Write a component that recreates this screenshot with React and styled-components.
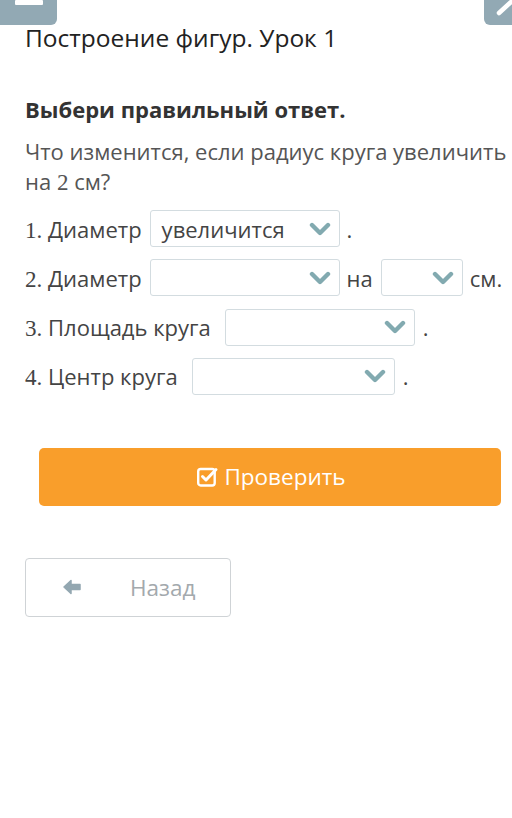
import React from "react";
import styled, { createGlobalStyle } from "styled-components";

const Global = createGlobalStyle`
  html, body { margin: 0; padding: 0; background: #fff; }
  body { font-family: "Open Sans", "Noto Sans", sans-serif; color: #333; }
`;

const Page = styled.div`
  width: 512px;
  height: 818px;
  overflow: hidden;
`;

const TopBar = styled.div`
  display: flex;
  justify-content: space-between;
  height: 25px;
`;

const Tab = styled.div`
  box-sizing: border-box;
  width: ${(p) => p.$w}px;
  height: 25px;
  background: #92a9b4;
  border-radius: ${(p) => (p.$left ? "0 0 6px 0" : "0 0 0 6px")};
  display: flex;
  align-items: flex-start;
  justify-content: ${(p) => (p.$left ? "center" : "flex-end")};
`;

const Bar = styled.div`
  width: 28px;
  height: 5px;
  background: #fff;
  border-radius: 1px;
`;

const Content = styled.div`
  padding: 0 0 0 25px;
`;

const Title = styled.h1`
  margin: 0;
  font-weight: 400;
  font-size: 24.5px;
  line-height: 26px;
  color: #222;
`;

const Instruction = styled.h2`
  margin: 43px 0 0;
  font-weight: 700;
  font-size: 22px;
  line-height: 30px;
  color: #333;
`;

const Question = styled.p`
  margin: 12px 0 0;
  font-size: 22px;
  line-height: 30px;
  color: #555;
  white-space: nowrap;
`;

const Num = styled.span`
  font-family: "Liberation Serif", "DejaVu Serif", serif;
  font-size: 1.05em;
`;

const Rows = styled.div`
  margin-top: 13px;
  display: flex;
  flex-direction: column;
  gap: 12.3px;
`;

const Row = styled.div`
  display: flex;
  align-items: center;
  height: 37px;
  font-size: 22px;
  color: #444;
  white-space: nowrap;
`;

const Label = styled.span`
  margin-right: ${(p) => p.$gap}px;
`;

const Select = styled.div`
  box-sizing: border-box;
  width: ${(p) => p.$w}px;
  height: 37px;
  border: 1px solid #d3dce0;
  border-radius: 3px;
  display: flex;
  align-items: center;
  justify-content: space-between;
  padding: 0 8px 0 11px;
  font-size: 22px;
  color: #444;
  background: #fff;
`;

const After = styled.span`
  margin: 0 ${(p) => p.$r || 0}px 0 ${(p) => p.$l}px;
`;

const Check = styled.button`
  margin: 53px 0 0 14px;
  width: 462px;
  height: 58px;
  border: none;
  border-radius: 5px;
  background: #f99e2b;
  color: #fff;
  font-family: inherit;
  font-size: 22.5px;
  display: flex;
  align-items: center;
  justify-content: center;
  gap: 5px;
  padding: 0 0 0 2px;
`;

const Back = styled.button`
  margin-top: 52px;
  width: 206px;
  height: 59px;
  border: 1px solid #cfd3d6;
  border-radius: 4px;
  background: #fff;
  color: #a3a9ad;
  font-family: inherit;
  font-size: 22.5px;
  display: flex;
  align-items: center;
  padding: 0 0 0 36px;
  box-sizing: border-box;
  gap: 48px;
`;

const Chevron = () => (
  <svg width="22" height="16" viewBox="0 0 22 16">
    <path d="M3 4 L11 12 L19 4" fill="none" stroke="#82aab0" strokeWidth="4.4" strokeLinecap="round" strokeLinejoin="round" />
  </svg>
);

const CheckIcon = () => (
  <svg width="23" height="23" viewBox="0 0 23 23">
    <rect x="2.2" y="4" width="16.5" height="16.5" rx="2.5" fill="none" stroke="#fff" strokeWidth="2.4" />
    <path d="M6.5 11.5 L10 15 L20 4.5" fill="none" stroke="#fff" strokeWidth="3" strokeLinecap="round" strokeLinejoin="round" />
  </svg>
);

const ArrowIcon = () => (
  <svg width="20" height="18" viewBox="0 0 20 18">
    <path d="M2 9 L9 2.5 L9 6.5 L18 6.5 L18 11.5 L9 11.5 L9 15.5 Z" fill="#93a7b1" strokeLinejoin="round" stroke="#93a7b1" strokeWidth="1.5" />
  </svg>
);

const PencilIcon = () => (
  <svg width="28" height="25" viewBox="0 0 28 25">
    <path d="M15 13 L27 2" stroke="#fff" strokeWidth="4.5" strokeLinecap="round" />
  </svg>
);

const Dropdown = ({ w, value }) => (
  <Select $w={w}>
    <span>{value || ""}</span>
    <Chevron />
  </Select>
);

export default function App() {
  return (
    <Page>
      <Global />
      <TopBar>
        <Tab $w={57} $left>
          <Bar />
        </Tab>
        <Tab $w={28}>
          <PencilIcon />
        </Tab>
      </TopBar>
      <Content>
        <Title>Построение фигур. Урок 1</Title>
        <Instruction>Выбери правильный ответ.</Instruction>
        <Question>
          Что изменится, если радиус круга увеличить
          <br />
          на <Num>2</Num> см?
        </Question>
        <Rows>
          <Row>
            <Label $gap={8}><Num>1.</Num> Диаметр</Label>
            <Dropdown w={190} value="увеличится" />
            <After $l={7}>.</After>
          </Row>
          <Row>
            <Label $gap={8}><Num>2.</Num> Диаметр</Label>
            <Dropdown w={190} />
            <After $l={7} $r={8}>на</After>
            <Dropdown w={82} />
            <After $l={7}>см.</After>
          </Row>
          <Row>
            <Label $gap={14}><Num>3.</Num> Площадь круга</Label>
            <Dropdown w={190} />
            <After $l={8}>.</After>
          </Row>
          <Row>
            <Label $gap={14}><Num>4.</Num> Центр круга</Label>
            <Dropdown w={203} />
            <After $l={8}>.</After>
          </Row>
        </Rows>
        <Check>
          <CheckIcon />
          Проверить
        </Check>
        <Back>
          <ArrowIcon />
          Назад
        </Back>
      </Content>
    </Page>
  );
}
